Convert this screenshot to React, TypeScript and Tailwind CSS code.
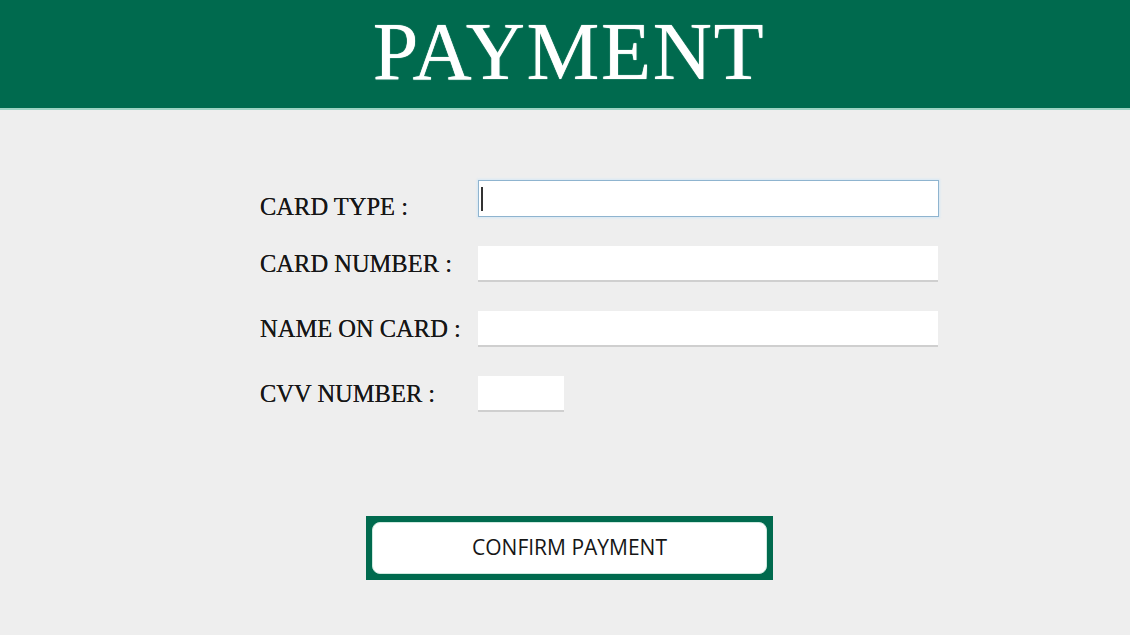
import React from "react";

const serif = { fontFamily: '"Liberation Serif", "Times New Roman", serif' };

function Field({ label, width, focused }: { label: string; width: string; focused?: boolean }) {
  return (
    <div className={focused ? "flex items-center h-[37px]" : "flex items-center h-[36px]"}>
      <div
        className={`w-[218px] text-[24.5px] text-[#161616] leading-none [text-shadow:0_0_0.6px_#333] ${
          focused ? "pt-[17px]" : "pt-[1px]"
        }`}
        style={serif}
      >
        {label}
      </div>
      <div
        className={
          focused
            ? `${width} h-[37px] bg-white border border-[#8fb4cf] shadow-[0_0_2px_1px_#d6e8f5] relative`
            : `${width} h-[36px] bg-white border-b-2 border-[#cfcfcf] relative`
        }
      >
        {focused && <div className="absolute left-[2px] top-[6px] w-[2px] h-[24px] bg-[#333]" />}
      </div>
    </div>
  );
}

export default function App() {
  return (
    <div className="w-[1130px] h-[635px] bg-[#eeeeee] flex flex-col overflow-hidden">
      <div className="h-[110px] shrink-0 bg-[#006a4e] flex items-center justify-center border-b-2 border-[#9dd2c2]">
        <div
          className="text-white text-[82px] leading-none tracking-[1.6px] pb-[4px] pl-[8px] [text-shadow:0_0_1px_#fff]"
          style={serif}
        >
          PAYMENT
        </div>
      </div>
      <div className="pl-[260px] pt-[70px] flex flex-col gap-[29px]">
        <Field label="CARD TYPE :" width="w-[461px]" focused />
        <Field label="CARD NUMBER :" width="w-[460px]" />
        <Field label="NAME ON CARD :" width="w-[460px]" />
        <Field label="CVV NUMBER :" width="w-[86px]" />
      </div>
      <div className="flex justify-center pt-[104px] pl-[9px]">
        <div className="w-[407px] h-[64px] bg-[#006a4e] p-[6px]">
          <button
            className="w-full h-full bg-white rounded-[8px] border border-[#cfe9df] text-[21px] font-medium text-[#161616] flex items-center justify-center"
            style={{ fontFamily: '"Open Sans", "Noto Sans", sans-serif' }}
          >
            CONFIRM PAYMENT
          </button>
        </div>
      </div>
    </div>
  );
}
